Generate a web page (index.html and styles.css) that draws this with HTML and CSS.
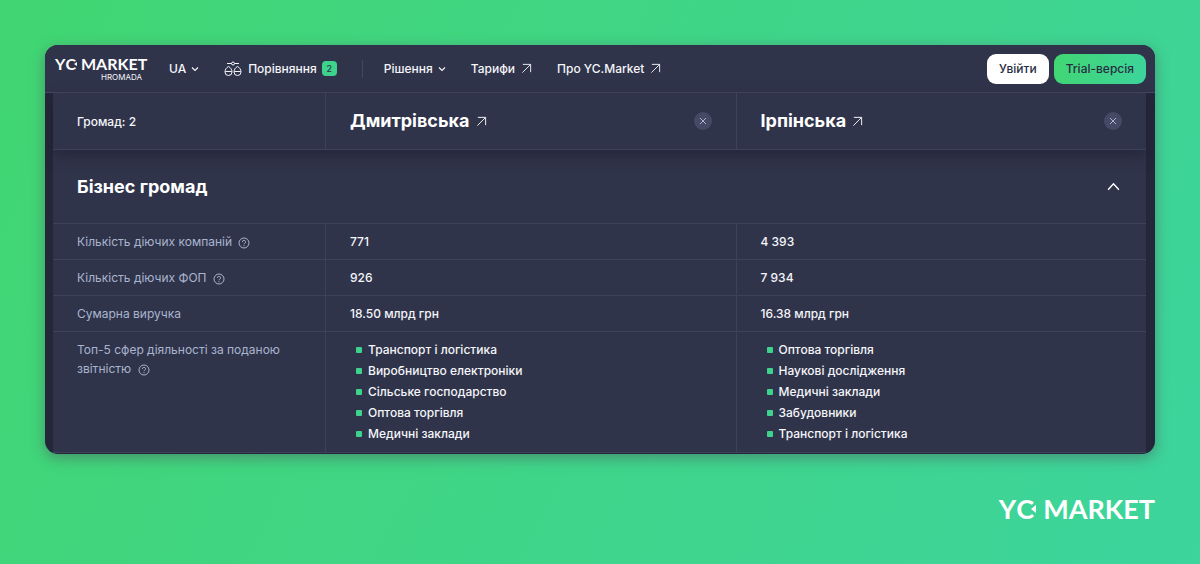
FILE: index.html
```html
<!DOCTYPE html>
<html lang="uk">
<head>
<meta charset="utf-8">
<meta name="viewport" content="width=device-width, initial-scale=1">
<title>YC.Market Hromada</title>
<link rel="stylesheet" href="styles.css">
</head>
<body>
<svg class="sprite" aria-hidden="true">
  <symbol id="arrow" viewBox="0 0 12 12"><path d="M2 1.500h8.500V10M10.300 1.700 1.500 10.500"/></symbol>
  <symbol id="down" viewBox="0 0 8 8"><path d="m1 2.500 3 3 3-3"/></symbol>
  <symbol id="up" viewBox="0 0 12 12"><path d="m1 9 5-5.500L11 9"/></symbol>
  <symbol id="close" viewBox="0 0 8 8"><path d="m1 1 6 6M7 1 1 7"/></symbol>
  <symbol id="help" viewBox="0 0 12 12"><circle cx="6" cy="6" r="5"/><path d="M4.400 4.900a1.600 1.500 0 1 1 2.300 1.300Q6 6.500 6 7.200M6 8.200v1"/></symbol>
  <symbol id="scales" viewBox="0 0 18 16"><circle cx="9" cy="2.500" r="1.500"/><path d="M3 2.500h4.500M10.500 2.500H15M1.300 10.500h6.400M10.300 10.500h6.400"/><path d="M4.500 5.500C2.500 6.500 1 8.500 1 11a3.500 3.500 0 0 0 7 0c0-2.500-1.500-4.500-3.500-5.500ZM13.500 5.500C11.500 6.500 10 8.500 10 11a3.500 3.500 0 0 0 7 0c0-2.500-1.500-4.500-3.500-5.500Z"/></symbol>
</svg>
<main class="page">
  <section class="card">
    <header class="topbar">
      <a class="brand" href="#">
        <span class="logo"><span>Y</span><span class="logo-c">C</span><span class="logo-name">MARKET</span></span>
        <span class="brand-sub">HROMADA</span>
      </a>
      <nav class="nav">
        <button class="nav-item" type="button">UA <svg class="icon-down"><use href="#down"/></svg></button>
        <a class="nav-item" href="#"><svg class="icon-scales"><use href="#scales"/></svg>Порівняння <span class="count">2</span></a>
        <span class="divider"></span>
        <button class="nav-item" type="button">Рішення <svg class="icon-down"><use href="#down"/></svg></button>
        <a class="nav-item" href="#">Тарифи <svg class="icon-arrow"><use href="#arrow"/></svg></a>
        <a class="nav-item" href="#">Про YC.Market <svg class="icon-arrow"><use href="#arrow"/></svg></a>
      </nav>
      <div class="actions">
        <button class="btn btn-light" type="button">Увійти</button>
        <button class="btn btn-green" type="button">Trial-версія</button>
      </div>
    </header>
    <div class="content">
      <table class="compare-table">
        <colgroup><col class="col-label"><col><col></colgroup>
        <thead>
          <tr>
            <th scope="col">Громад: 2</th>
            <th scope="col"><div class="place"><a class="place-link" href="#">Дмитрівська <svg class="icon-place"><use href="#arrow"/></svg></a><button class="remove" type="button" aria-label="Прибрати"><svg><use href="#close"/></svg></button></div></th>
            <th scope="col"><div class="place"><a class="place-link" href="#">Ірпінська <svg class="icon-place"><use href="#arrow"/></svg></a><button class="remove" type="button" aria-label="Прибрати"><svg><use href="#close"/></svg></button></div></th>
          </tr>
        </thead>
        <tbody>
          <tr class="group"><th colspan="3" scope="colgroup"><button class="group-toggle" type="button">Бізнес громад <svg><use href="#up"/></svg></button></th></tr>
          <tr><th scope="row">Кількість діючих компаній <svg class="icon-help"><use href="#help"/></svg></th><td>771</td><td>4 393</td></tr>
          <tr><th scope="row">Кількість діючих ФОП <svg class="icon-help"><use href="#help"/></svg></th><td>926</td><td>7 934</td></tr>
          <tr><th scope="row">Сумарна виручка</th><td>18.50 млрд грн</td><td>16.38 млрд грн</td></tr>
          <tr class="row-list">
            <th scope="row">Топ-5 сфер діяльності за поданою звітністю <svg class="icon-help"><use href="#help"/></svg></th>
            <td><ul><li>Транспорт і логістика</li><li>Виробництво електроніки</li><li>Сільське господарство</li><li>Оптова торгівля</li><li>Медичні заклади</li></ul></td>
            <td><ul><li>Оптова торгівля</li><li>Наукові дослідження</li><li>Медичні заклади</li><li>Забудовники</li><li>Транспорт і логістика</li></ul></td>
          </tr>
        </tbody>
      </table>
    </div>
  </section>
  <footer class="footer">
    <div class="logo logo-large"><span>Y</span><span class="logo-c">C</span><span class="logo-name">MARKET</span></div>
  </footer>
</main>
</body>
</html>
```
FILE: styles.css
```css
* { box-sizing: border-box; }
body {
  margin: 0;
  font: 500 12px/19px Inter, "Liberation Sans", sans-serif;
  color: #f5f6fa;
}
a { color: inherit; text-decoration: none; }
button { font: inherit; color: inherit; border: 0; padding: 0; background: none; cursor: pointer; }
svg { fill: none; stroke: currentColor; flex: none; }
.sprite { position: absolute; width: 0; height: 0; }

.page {
  min-height: 100vh;
  padding: 45px;
  background: linear-gradient(116deg, #41d672 0%, #3dd49d 100%);
}
.card {
  overflow: hidden;
  border-radius: 13px;
  background: #24263a;
  box-shadow: 0 4px 14px rgba(80, 80, 90, 0.5);
}

.topbar {
  display: flex;
  align-items: center;
  height: 48px;
  padding: 0 9px 0 10px;
  background: #30344a;
  border-bottom: 1px solid #434763;
}
.brand { display: flex; flex-direction: column; width: 90px; }
.logo {
  display: flex;
  font: 700 16px/16px Lato, sans-serif;
  color: #fff;
}
.logo-c { position: relative; }
.logo-c::after {
  content: "";
  position: absolute;
  top: 50%;
  right: -1px;
  border: solid transparent;
  border-width: 2px 3px 2px 0;
  border-right-color: currentColor;
  transform: translateY(-50%);
}
.logo-name { margin-left: 5px; }
.brand-sub { align-self: flex-end; padding-right: 3px; font-size: 8px; line-height: 10px; font-weight: 400; }

.nav { display: flex; align-items: center; flex: 1; margin-left: 24px; }
.nav-item { display: flex; align-items: center; margin-right: 25px; white-space: nowrap; }
.icon-down { width: 8px; height: 8px; margin-left: 5px; stroke-width: 1.2; }
.icon-arrow { width: 11px; height: 11px; margin-left: 6px; }
.icon-scales { width: 18px; height: 16px; margin-right: 6px; }
.count {
  width: 15px;
  margin-left: 5px;
  border-radius: 4px;
  background: #3ed38c;
  color: #30344a;
  font-size: 9px;
  line-height: 15px;
  text-align: center;
}
.divider { width: 1px; height: 18px; margin-right: 21px; background: #434763; }

.actions { display: flex; gap: 5px; }
.btn { height: 30px; padding: 0 12px; border-radius: 9px; color: #2a2d42; }
.btn-light { background: #fff; }
.btn-green { background: linear-gradient(106deg, #41d672, #3dd49d); }

.content { padding: 0 9px 1px 8px; }
.compare-table {
  width: 100%;
  table-layout: fixed;
  border-spacing: 0;
  background: #30344a;
}
.col-label { width: 272px; }
th, td {
  padding: 8px 24px;
  border-bottom: 1px solid #3d4159;
  text-align: left;
  vertical-align: top;
  font-weight: 500;
}
th + td, td + td, th + th { border-left: 1px solid #3d4159; }
tbody th { color: #a9b4cf; font-weight: 400; }

thead { position: relative; box-shadow: 0 6px 12px rgba(30, 32, 48, 0.6); }
thead th { height: 57px; padding: 0 24px; vertical-align: middle; background: #30344a; }
.place { display: flex; align-items: center; justify-content: space-between; }
.place-link { display: flex; align-items: center; font-size: 18px; line-height: 24px; font-weight: 700; color: #fff; }
.icon-place { width: 11px; height: 11px; margin-left: 6px; }
.remove {
  display: grid;
  place-items: center;
  width: 18px;
  height: 18px;
  border-radius: 50%;
  background: #454966;
  color: #aab3cf;
}
.remove svg { width: 8px; height: 8px; }

.group th { padding: 0; }
.group-toggle {
  display: flex;
  align-items: center;
  justify-content: space-between;
  width: 100%;
  height: 73px;
  padding: 0 26px 0 24px;
  font-size: 18px;
  font-weight: 700;
  color: #fff;
}
.group-toggle svg { width: 13px; height: 13px; stroke-width: 1.3; }
.icon-help { width: 12px; height: 12px; margin-left: 3px; vertical-align: -3px; }
.row-list td { padding: 7px 24px 8px; }

ul { margin: 0; padding: 0; list-style: none; }
li { display: flex; align-items: center; gap: 6px; padding-left: 6px; line-height: 21px; }
li::before { content: ""; width: 6px; height: 6px; border-radius: 1px; background: #3ed38c; }

.footer { display: flex; justify-content: flex-end; padding-top: 41px; }
.logo-large { font-size: 27px; line-height: 28px; }
.logo-large .logo-c::after { right: -2px; border-width: 4px 5px 4px 0; }
.logo-large .logo-name { margin-left: 9px; }
```
